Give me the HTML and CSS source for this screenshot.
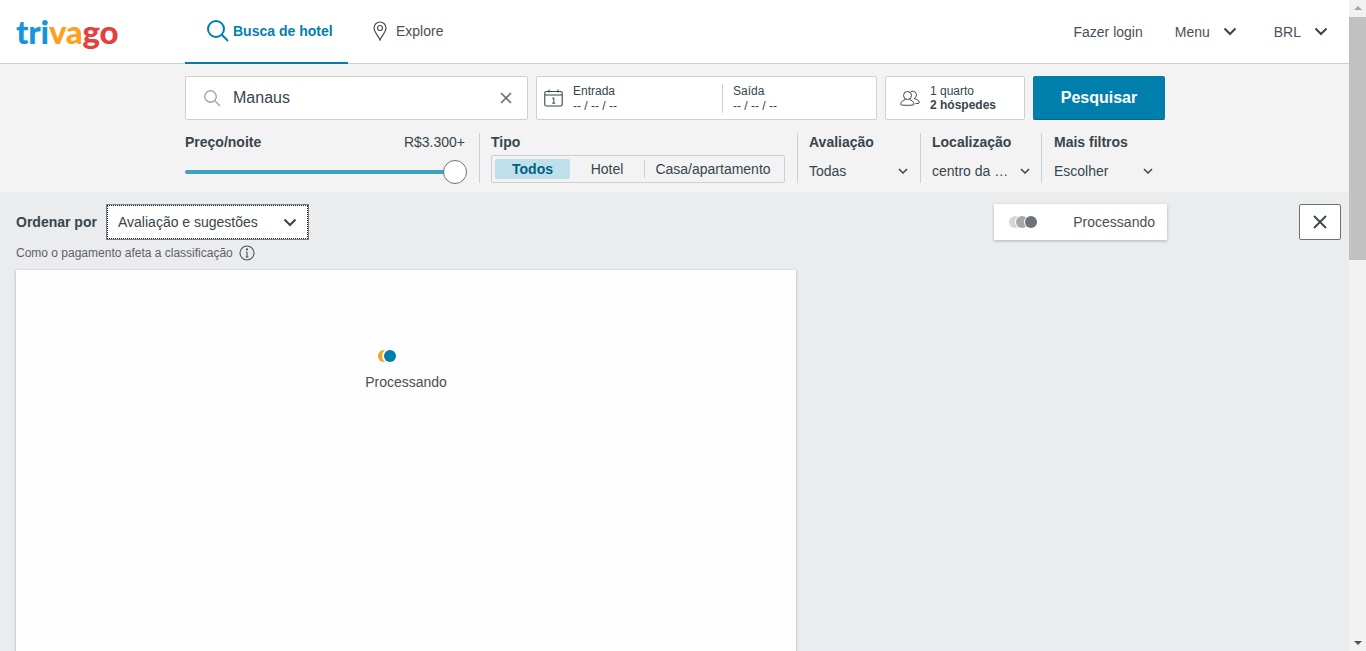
FILE: index.html
```html
<!DOCTYPE html>
<html lang="pt-BR">
<head>
  <meta charset="UTF-8">
  <meta name="viewport" content="width=device-width, initial-scale=1.0">
  <title>trivago</title>
  <link rel="stylesheet" href="styles.css">
</head>
<body>
  <div class="page">
    <header class="topbar">
      <a class="logo" href="#"><span class="logo-blue">tri</span><span class="logo-orange">va</span><span class="logo-red">go</span></a>
      <nav class="tabs">
        <a class="tab tab-active" href="#">
          <svg width="24" height="24" viewBox="0 0 24 24" fill="none" stroke="#007fad" stroke-width="2"><circle cx="10" cy="10" r="8"/><path d="M15.8 15.8 L22 22"/></svg>
          Busca de hotel
        </a>
        <a class="tab tab-explore" href="#">
          <svg width="16" height="20" viewBox="0 0 16 20" fill="none" stroke="#4a4f55" stroke-width="1.2"><path d="M8 19 C6 14 2 11 2 7 A6 6 0 0 1 14 7 C14 11 10 14 8 19 Z"/><circle cx="8" cy="7" r="2.5"/></svg>
          Explore
        </a>
      </nav>
      <div class="top-links">
        <a class="top-link login" href="#">Fazer login</a>
        <a class="top-link menu" href="#">Menu
          <svg class="chev-big" viewBox="0 0 14 9" fill="none" stroke="#37454d" stroke-width="2"><path d="M1.5 1.5 L7 7 L12.5 1.5"/></svg>
        </a>
        <a class="top-link brl" href="#">BRL
          <svg class="chev-big" viewBox="0 0 14 9" fill="none" stroke="#37454d" stroke-width="2"><path d="M1.5 1.5 L7 7 L12.5 1.5"/></svg>
        </a>
      </div>
    </header>

    <section class="search-band">
      <div class="search-row">
        <div class="box search-box">
          <svg width="18" height="18" viewBox="0 0 18 18" fill="none" stroke="#a3a5a8" stroke-width="1.4"><circle cx="7.5" cy="7.5" r="5.8"/><path d="M11.8 11.8 L17 17"/></svg>
          <span class="search-text">Manaus</span>
          <svg class="clear" width="12" height="12" viewBox="0 0 12 12" fill="none" stroke="#6d7074" stroke-width="1.6"><path d="M1 1 L11 11 M11 1 L1 11"/></svg>
        </div>
        <div class="box date-box">
          <svg width="19" height="18" viewBox="0 0 19 18" fill="none" stroke="#37454d" stroke-width="1.1"><rect x="0.8" y="2.5" width="17.4" height="14.5" rx="1.5"/><path d="M1 6 H18 M5 0.5 V3.5 M14 0.5 V3.5"/><path d="M8.3 9.6 L9.8 8.7 V14.2 M8.2 14.2 H11.2" stroke-width="1"/></svg>
          <div class="date-part date-in">
            <span>Entrada</span>
            <span>-- / -- / --</span>
          </div>
          <div class="date-part date-out">
            <span>Saída</span>
            <span>-- / -- / --</span>
          </div>
        </div>
        <div class="box guests-box">
          <svg width="20" height="18" viewBox="0 0 20 18" fill="none" stroke="#37454d" stroke-width="1"><circle cx="7.5" cy="6.5" r="4"/><path d="M5.5 10.5 C3.5 11.2 0.7 12.5 0.7 15.5 C0.7 16.6 14 16.6 14 15.5 C14 12.5 11.5 11.2 9.5 10.5"/><path d="M10.5 2.8 A3.8 3.8 0 1 1 14 9.5 C16.5 10.2 19.3 11.3 19.3 13.6 C19.3 14.5 17.5 14.6 15.5 14.6"/></svg>
          <div class="guests-text">
            <span>1 quarto</span>
            <strong>2 hóspedes</strong>
          </div>
        </div>
        <button class="search-btn" type="button">Pesquisar</button>
      </div>

      <div class="filters">
        <div class="filter filter-price">
          <div class="price-head">
            <span class="filter-title">Preço/noite</span>
            <span class="price-value">R$3.300+</span>
          </div>
          <div class="slider"><span class="slider-knob"></span></div>
        </div>
        <div class="filter filter-type">
          <span class="filter-title">Tipo</span>
          <div class="segments">
            <span class="segment segment-on">Todos</span>
            <span class="segment segment-hotel">Hotel</span>
            <span class="segment segment-casa">Casa/apartamento</span>
          </div>
        </div>
        <div class="filter filter-rating">
          <span class="filter-title">Avaliação</span>
          <div class="filter-value">Todas
            <svg class="chev-small" viewBox="0 0 10 6" fill="none" stroke="#37454d" stroke-width="1.5"><path d="M1 1 L5 5 L9 1"/></svg>
          </div>
        </div>
        <div class="filter filter-place">
          <span class="filter-title">Localização</span>
          <div class="filter-value">centro da …
            <svg class="chev-small" viewBox="0 0 10 6" fill="none" stroke="#37454d" stroke-width="1.5"><path d="M1 1 L5 5 L9 1"/></svg>
          </div>
        </div>
        <div class="filter filter-more">
          <span class="filter-title">Mais filtros</span>
          <div class="filter-value">Escolher
            <svg class="chev-small" viewBox="0 0 10 6" fill="none" stroke="#37454d" stroke-width="1.5"><path d="M1 1 L5 5 L9 1"/></svg>
          </div>
        </div>
      </div>
    </section>

    <main class="results">
      <div class="toolbar">
        <div class="sort">
          <div class="sort-row">
            <span class="sort-label">Ordenar por</span>
            <div class="sort-select">
              Avaliação e sugestões
              <svg class="chev-big" viewBox="0 0 14 9" fill="none" stroke="#37454d" stroke-width="2"><path d="M1.5 1.5 L7 7 L12.5 1.5"/></svg>
            </div>
          </div>
          <div class="sort-note">Como o pagamento afeta a classificação
            <svg width="16" height="16" viewBox="0 0 16 16" fill="none" stroke="#4a4f55" stroke-width="1.1"><circle cx="8" cy="8" r="7"/><path d="M8 7 V12 M6.6 12 H9.4 M6.8 7 H8" /><circle cx="8" cy="4.4" r="0.5" fill="#4a4f55"/></svg>
          </div>
        </div>
        <div class="status-pill">
          <span class="dots">
            <i class="dot dot-1"></i><i class="dot dot-2"></i><i class="dot dot-3"></i>
          </span>
          Processando
        </div>
        <button class="close-btn" type="button" aria-label="Fechar">
          <svg width="14" height="14" viewBox="0 0 14 14" fill="none" stroke="#37454d" stroke-width="1.8"><path d="M1 1 L13 13 M13 1 L1 13"/></svg>
        </button>
      </div>
      <div class="list-card">
        <span class="spinner"><i class="spin-orange"></i><i class="spin-blue"></i></span>
        <span class="list-loading">Processando</span>
      </div>
    </main>
  </div>

  <div class="scrollbar">
    <span class="arrow arrow-up"></span>
    <span class="thumb"></span>
    <span class="arrow arrow-down"></span>
  </div>
</body>
</html>
```

FILE: styles.css
```css
html, body {
  margin: 0;
  padding: 0;
  height: 100%;
  overflow: hidden;
}

body {
  display: flex;
  font-family: "Liberation Sans", Arial, sans-serif;
  font-size: 14px;
  color: #37454d;
  background-color: #ebecee;
}

a {
  color: inherit;
  text-decoration: none;
}

.page {
  flex: 1;
  min-width: 0;
  height: 651px;
  overflow: hidden;
}

/* top bar */
.topbar {
  display: flex;
  align-items: stretch;
  box-sizing: border-box;
  height: 64px;
  padding-left: 16px;
  background-color: #fff;
  border-bottom: 1px solid #cdd0d2;
}

.logo {
  width: 169px;
  font-family: Lato, sans-serif;
  font-size: 33px;
  font-weight: 900;
  line-height: 63px;
  letter-spacing: -0.2px;
}
.logo-blue { color: #1795dc; }
.logo-orange { color: #fda11d; }
.logo-red { color: #e3403f; }

.tabs {
  display: flex;
}
.tab {
  display: flex;
  align-items: center;
  box-sizing: border-box;
  height: 64px;
  color: #4a4f55;
}
.tab-active {
  width: 163px;
  gap: 3px;
  padding: 0 0 1px 21px;
  border-bottom: 2px solid #007fad;
  color: #007fad;
  font-weight: bold;
}
.tab-explore {
  gap: 8px;
  padding: 0 0 2px 24px;
}

.top-links {
  display: flex;
  align-items: center;
  margin-left: auto;
  padding-right: 21px;
  color: #4a4f55;
}
.top-link {
  display: flex;
  align-items: center;
}
.menu {
  margin-left: 32px;
}
.brl {
  margin-left: 37px;
}
.chev-big {
  width: 14px;
  height: 9px;
  margin-left: 13px;
}

/* search band */
.search-band {
  box-sizing: border-box;
  height: 128px;
  padding: 12px 0 0 185px;
  background-color: #f3f3f3;
}

.search-row {
  display: flex;
  gap: 8px;
  height: 44px;
}

.box {
  display: flex;
  align-items: center;
  box-sizing: border-box;
  background-color: #fff;
  border: 1px solid #cdd0d2;
  border-radius: 2px;
}

.search-box {
  width: 343px;
  padding: 0 15px 0 17px;
}
.search-text {
  flex: 1;
  margin-left: 12px;
  font-size: 16px;
}

.date-box {
  width: 341px;
  padding-left: 7px;
}
.date-part {
  display: flex;
  flex-direction: column;
  gap: 1px;
  font-size: 12px;
  line-height: 14px;
}
.date-in {
  width: 149px;
  margin-left: 10px;
}
.date-out {
  padding-left: 10px;
  border-left: 1px solid #cdd0d2;
}

.guests-box {
  width: 140px;
  padding-left: 14px;
}
.guests-text {
  display: flex;
  flex-direction: column;
  margin-left: 10px;
  font-size: 12px;
  line-height: 14px;
}

.search-btn {
  width: 132px;
  padding: 0;
  border: none;
  border-bottom: 1px solid #006a91;
  border-radius: 2px;
  background-color: #007fad;
  color: #fff;
  font-family: inherit;
  font-size: 16px;
  font-weight: bold;
}

/* filters */
.filters {
  display: flex;
  margin-top: 13px;
  height: 50px;
}
.filter {
  box-sizing: border-box;
  padding-left: 11px;
  margin-left: 0;
  border-left: 1px solid #cdd0d2;
}
.filter-title {
  display: block;
  font-weight: bold;
  line-height: 18px;
}
.filter-value {
  display: flex;
  align-items: center;
  justify-content: space-between;
  margin-top: 11px;
  padding-right: 12px;
  line-height: 18px;
}
.filter-place .filter-value,
.filter-more .filter-value {
  padding-right: 11px;
}
.chev-small {
  width: 10px;
  height: 6px;
}

.filter-price {
  width: 282px;
  margin-right: 12px;
  padding-left: 0;
  border-left: none;
}
.price-head {
  display: flex;
  justify-content: space-between;
  padding-right: 2px;
}
.price-value {
  line-height: 18px;
}
.slider {
  position: relative;
  height: 4px;
  margin-top: 19px;
  margin-right: 2px;
  border-radius: 2px;
  background-color: #41a0c2;
}
.slider-knob {
  position: absolute;
  top: -10px;
  right: -2px;
  box-sizing: border-box;
  width: 24px;
  height: 24px;
  border: 1px solid #6d7074;
  border-radius: 50%;
  background-color: #fff;
}

.filter-type {
  width: 318px;
}
.segments {
  display: flex;
  align-items: center;
  box-sizing: border-box;
  width: 294px;
  height: 28px;
  margin-top: 4px;
  padding: 3px;
  border: 1px solid #cdd0d2;
  border-radius: 2px;
}
.segment {
  line-height: 20px;
  text-align: center;
}
.segment-on {
  width: 75px;
  border-radius: 2px;
  background-color: #bfdfeb;
  color: #005f82;
  font-weight: bold;
}
.segment-hotel {
  width: 74px;
}
.segment-casa {
  flex: 1;
  line-height: 18px;
  border-left: 1px solid #cdd0d2;
}

.filter-rating {
  width: 123px;
}
.filter-place {
  width: 121px;
}
.filter-more {
  width: 123px;
  padding-left: 12px;
}

/* results */
.results {
  padding-left: 16px;
  height: 459px;
  overflow: hidden;
}
.toolbar {
  display: flex;
  align-items: flex-start;
  height: 78px;
  padding: 12px 8px 0 0;
  box-sizing: border-box;
}
.sort {
  width: 978px;
}
.sort-row {
  display: flex;
  align-items: center;
}
.sort-label {
  width: 90px;
  font-weight: bold;
}
.sort-select {
  display: flex;
  align-items: center;
  justify-content: space-between;
  box-sizing: border-box;
  width: 203px;
  height: 36px;
  padding: 0 11px;
  background-color: #fff;
  border: 1px solid #7d8185;
  outline: 1px dotted #222;
  outline-offset: -2px;
}
.sort-note {
  display: flex;
  align-items: center;
  gap: 6px;
  margin-top: 5px;
  font-size: 12px;
  line-height: 16px;
  color: #5d6266;
}

.status-pill {
  display: flex;
  align-items: center;
  justify-content: space-between;
  box-sizing: border-box;
  width: 173px;
  height: 36px;
  padding: 0 12px 0 14px;
  background-color: #fff;
  box-shadow: 0 1px 3px rgba(0, 0, 0, 0.25);
  color: #4a4f55;
}
.dots {
  position: relative;
  width: 30px;
  height: 12px;
}
.dot {
  position: absolute;
  top: 0;
  width: 12px;
  height: 12px;
  border-radius: 50%;
  box-shadow: -1px 0 0 0 #fff;
}
.dot-1 { left: 1px; background-color: #d6d7d9; }
.dot-2 { left: 8px; background-color: #a6a9ac; }
.dot-3 { left: 17px; background-color: #6d7278; }

.close-btn {
  display: flex;
  align-items: center;
  justify-content: center;
  width: 42px;
  height: 36px;
  margin-left: auto;
  padding: 0;
  background-color: #fff;
  border: 1px solid #6d7074;
  border-radius: 2px;
}

.list-card {
  display: flex;
  flex-direction: column;
  align-items: center;
  width: 780px;
  height: 500px;
  padding-top: 80px;
  box-sizing: border-box;
  background-color: #fdfdfd;
  box-shadow: 0 1px 3px rgba(0, 0, 0, 0.3);
  color: #4a4f55;
}
.spinner {
  position: relative;
  width: 20px;
  height: 12px;
  margin-left: -38px;
}
.spinner i {
  position: absolute;
  top: 0;
  width: 12px;
  height: 12px;
  border-radius: 50%;
}
.spin-orange {
  left: 1px;
  background-color: #fda11d;
}
.spin-blue {
  left: 7px;
  background-color: #007fad;
  box-shadow: -1px 0 0 1px #fdfdfd;
}
.list-loading {
  margin-top: 12px;
  line-height: 16px;
}

/* window scrollbar */
.scrollbar {
  position: relative;
  flex: none;
  width: 17px;
  height: 651px;
  background-color: #f1f1f1;
}
.thumb {
  position: absolute;
  top: 17px;
  left: 0;
  width: 17px;
  height: 243px;
  background-color: #c1c1c1;
}
.arrow {
  position: absolute;
  left: 5px;
  width: 0;
  height: 0;
  border-left: 4px solid transparent;
  border-right: 4px solid transparent;
}
.arrow-up {
  top: 6px;
  border-bottom: 4px solid #a3a3a3;
}
.arrow-down {
  bottom: 6px;
  border-top: 4px solid #505050;
}
```
